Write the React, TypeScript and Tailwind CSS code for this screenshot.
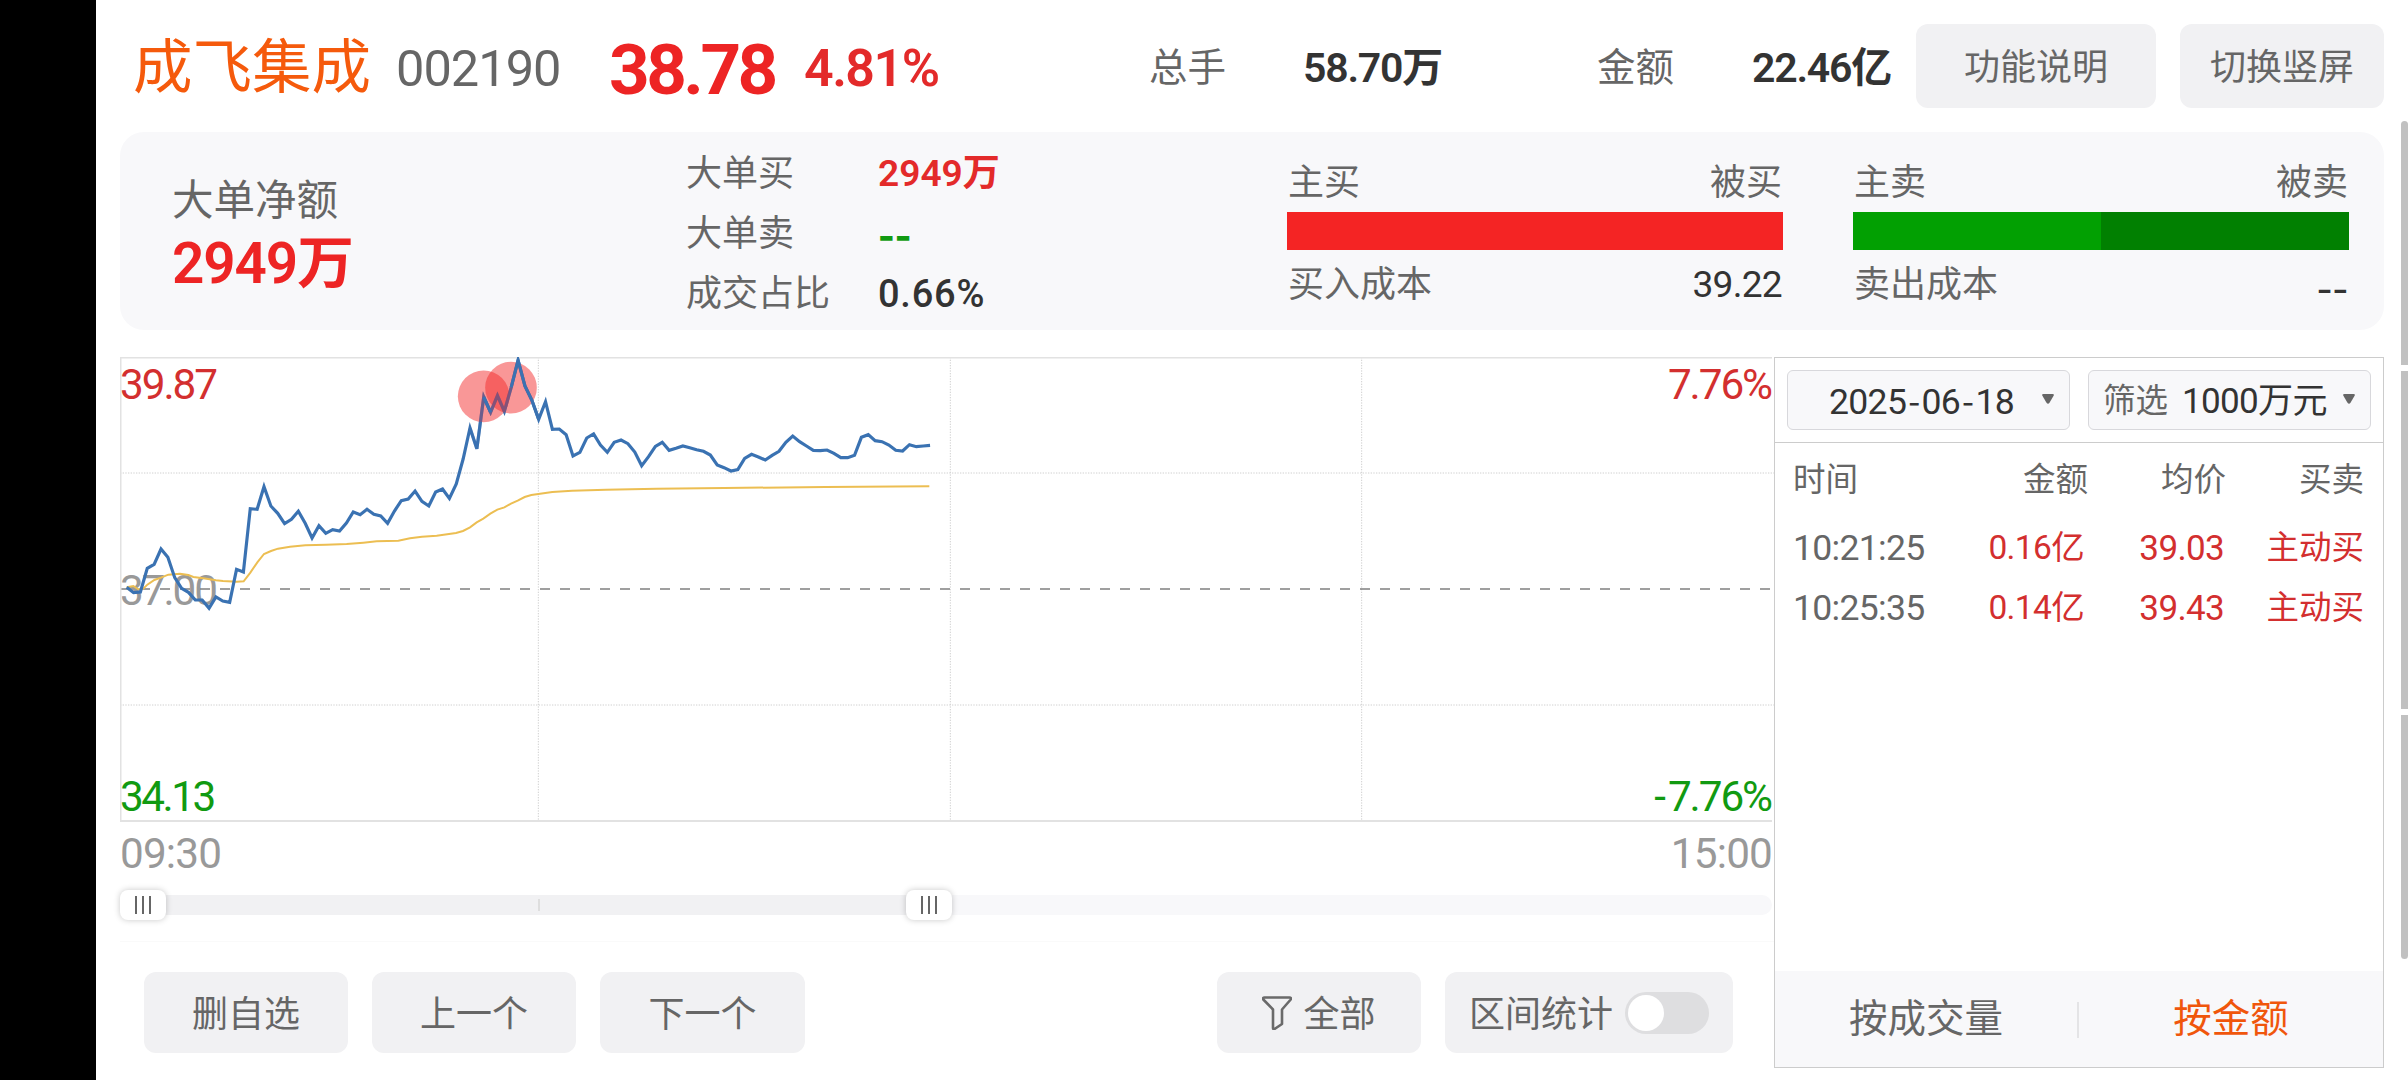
import type { ReactNode } from "react"

interface ITrade {
  time: string
  amount: string
  price: string
  side: string
}

const trades: ITrade[] = [
  { time: "10:21:25", amount: "0.16亿", price: "39.03", side: "主动买" },
  { time: "10:25:35", amount: "0.14亿", price: "39.43", side: "主动买" },
]

// one value per minute from 09:30, in chart units (3 per pixel)
const prices = [
  712, 728, 726, 655, 643, 597, 622, 683, 715, 727, 750, 750, 775, 741, 753,
  757, 658, 666, 476, 478, 410, 468, 490, 521, 508, 484, 520, 564, 527, 550,
  539, 543, 519, 486, 494, 478, 493, 498, 520, 483, 452, 447, 423, 454, 468,
  426, 417, 445, 402, 327, 234, 296, 141, 187, 137, 184, 112, 31, 108, 150,
  208, 155, 238, 237, 254, 318, 307, 264, 252, 285, 307, 277, 270, 281, 306,
  347, 320, 289, 277, 301, 295, 288, 293, 299, 304, 315, 345, 353, 363, 359,
  325, 313, 321, 330, 316, 304, 277, 258, 275, 288, 301, 302, 300, 310, 323,
  323, 316, 262, 254, 272, 275, 285, 301, 303, 284, 290, 288, 286,
]

const average =
  "20,712 40,708 55,718 70,716 82,704 103,690 123,683 145,674 180,671 205,675 220,681 250,685 288,691 309,693 350,695 371,694 391,668 412,637 432,612 453,603 474,596 510,590 556,586 618,584 680,582 730,578 770,574 835,572 870,565 906,560 950,557 1008,549 1029,543 1050,532 1070,517 1090,506 1111,491 1132,479 1153,472 1173,461 1193,452 1214,441 1234,435 1255,432 1297,426 1356,422 1458,419 1610,416 1813,414 2117,411 2428,409"

const points = prices.map((y, i) => `${(20 + i * 20.6).toFixed(1)},${y}`)

const num = "tracking-[-0.02em] [font-size-adjust:cap-height_0.733]"

const PriceChart = () => (
  <svg viewBox="0 21 4962 1395" className="relative block h-[465px] w-[1654px]" fill="none">
    <g stroke="#d0d0d0" strokeWidth={3} strokeDasharray="4 4">
      <path d="M0 369H4962M0 1065H4962" />
      <path d="M1255 21V1413M2491 21V1413M3725 21V1413" />
    </g>
    <path d="M0 717H4962" stroke="#808080" strokeWidth={5} strokeDasharray="30 30" />
    <path d="M4956 22.5H1.5V1413H4956" stroke="#e2e2e2" strokeWidth={6} />
    <polyline points={average} stroke="#ecbe52" strokeWidth={6} />
    <polyline points={points.join(" ")} stroke="#3a72b2" strokeWidth={9.5} />
    <circle cx={1091} cy={139} r={77.5} fill="#f22525" fillOpacity={0.48} />
    <circle cx={1173} cy={113} r={77.5} fill="#f22525" fillOpacity={0.48} />
    <g stroke="#3a72b2" strokeWidth={9.5}>
      <polyline points={points.slice(50, 57).join(" ")} strokeOpacity={0.45} />
      <polyline points={points.slice(52, 54).join(" ")} />
      <polyline points={points.slice(56, 61).join(" ")} />
    </g>
  </svg>
)

const Handle = () => (
  <div className="z-10 flex h-[30px] w-[46px] shrink-0 items-center justify-center gap-[5px] rounded-lg bg-white shadow-[0_0_6px_rgba(0,0,0,0.22)]">
    <span className="h-[18px] w-[2px] bg-[#666]" />
    <span className="h-[18px] w-[2px] bg-[#666]" />
    <span className="h-[18px] w-[2px] bg-[#666]" />
  </div>
)

const Slider = () => (
  <div className="mt-[6px] flex h-[30px] items-center">
    <Handle />
    <div className="-mx-3 flex h-5 w-[764px] items-center bg-[#f1f1f3] pl-[384px]">
      <span className="h-3 w-[2px] bg-[#dedede]" />
    </div>
    <Handle />
    <div className="-ml-3 h-5 w-[832px] rounded-r-[10px] bg-[#f8f8fa]" />
  </div>
)

const GrayButton = ({ className, children }: { className: string; children: ReactNode }) => (
  <button className={`flex items-center justify-center rounded-xl bg-[#f1f1f3] pt-1 text-[36px] ${className}`}>
    {children}
  </button>
)

const CostBlock = ({ left, right, label, value, children }: {
  left: string
  right: string
  label: string
  value: ReactNode
  children: ReactNode
}) => (
  <div className="flex w-[496px] flex-col pt-[33px] text-[36px]">
    <div className="flex h-[36px] items-center justify-between px-px">
      <span>{left}</span>
      <span>{right}</span>
    </div>
    <div className="mt-[11px] flex h-[38px]">{children}</div>
    <div className="mt-[17px] flex h-[36px] items-center justify-between px-px">
      <span>{label}</span>
      <span className={`text-[#333] ${num}`}>{value}</span>
    </div>
  </div>
)

const Header = () => (
  <header className="flex h-[132px] items-center pl-[13px] text-[38.5px]">
    <h1 className="w-[263px] pt-[6px] text-[59.5px] text-[#f55a0c]">成飞集成</h1>
    <span className={`w-[213px] pt-[5px] text-[49px] ${num}`}>002190</span>
    <span className="w-[195px] pt-[6px] text-[71px] font-bold tracking-[-0.05em] text-[#ed2424]">38.78</span>
    <span className="w-[345px] pt-[5px] text-[52px] font-semibold tracking-[-0.03em] text-[#e32a2a]">4.81%</span>
    <span className="w-[154px] pt-1">总手</span>
    <span className="w-[294px] pt-1 text-[41px] font-semibold tracking-[-0.03em] text-[#333]">58.70万</span>
    <span className="w-[155px] pt-1">金额</span>
    <span className="w-[164px] pt-1 text-[41px] font-semibold tracking-[-0.03em] text-[#333]">22.46亿</span>
    <GrayButton className="h-[84px] w-[240px]">功能说明</GrayButton>
    <GrayButton className="ml-6 h-[84px] w-[204px]">切换竖屏</GrayButton>
  </header>
)

const Dashes = () => (
  <span className="block font-['Noto_Sans_CJK_SC',sans-serif] text-[45px] leading-[36px] tracking-normal">--</span>
)

const Summary = () => (
  <section className="flex h-[198px] w-[2264px] rounded-3xl bg-[#f8f8fa] pl-[52px]">
    <div className="flex w-[514px] flex-col pt-[48px]">
      <span className="text-[41.5px]">大单净额</span>
      <span className={`mt-[14px] text-[55px] font-semibold text-[#ed2424] ${num}`}>2949万</span>
    </div>
    <div className="grid w-[601px] grid-cols-[192px_1fr] grid-rows-[60px_60px_60px] content-start items-center pt-[12px] text-[36px]">
      <span>大单买</span>
      <span className="font-semibold text-[#e32a2a] [font-size-adjust:cap-height_0.733]">2949万</span>
      <span>大单卖</span>
      <span className="pb-1 font-bold text-[#119a11]"><Dashes /></span>
      <span>成交占比</span>
      <span className="text-[38px] font-medium tracking-[0.02em] text-[#333]">0.66%</span>
    </div>
    <div className="flex gap-[70px]">
      <CostBlock left="主买" right="被买" label="买入成本" value="39.22">
        <div className="flex-1 bg-[#f42424]" />
      </CostBlock>
      <CostBlock left="主卖" right="被卖" label="卖出成本" value={<Dashes />}>
        <div className="flex-1 bg-[#02a002]" />
        <div className="flex-1 bg-[#018001]" />
      </CostBlock>
    </div>
  </section>
)

const Caret = () => (
  <svg viewBox="0 0 12 10" className="mb-[5px] h-[10px] w-3" fill="#666">
    <path d="M1.500 0h9Q12.500 0 11.600 1.800L7.500 8.800Q6 10.500 4.500 8.800L.4 1.800Q-.5 0 1.500 0z" />
  </svg>
)

const Hyphen = () => (
  <span className="px-[2px] font-['Noto_Sans_CJK_SC',sans-serif]">-</span>
)

const TradePanel = () => (
  <aside className="flex h-[711px] w-[610px] flex-col border border-[#cccccc] text-[32.5px]">
    <div className="flex h-[85px] items-start gap-[18px] border-b border-[#cccccc] pt-[12px] pl-[12px]">
      <div className="flex h-[60px] w-[283px] items-center rounded-md border border-[#d8d8dc] bg-[#f8f8fa] pt-[2px] pl-[41px] text-[#333]">
        <span className={`w-[213px] text-[34.5px] ${num}`}>2025<Hyphen />06<Hyphen />18</span>
        <Caret />
      </div>
      <div className="flex h-[60px] w-[283px] items-center rounded-md border border-[#d8d8dc] bg-[#f8f8fa] pt-[2px] pl-[14px] text-[#333]">
        <span className="w-[79px] text-[#666]">筛选</span>
        <span className={`w-[161px] text-[34px] ${num}`}>1000万元</span>
        <Caret />
      </div>
    </div>
    <div className="grid h-[75px] grid-cols-[151px_144px_138px_138px] items-center pl-[18px] text-right">
      <span className="text-left">时间</span>
      <span>金额</span>
      <span>均价</span>
      <span>买卖</span>
    </div>
    {trades.map((trade: ITrade) => (
      <div key={trade.time} className="grid h-[60px] grid-cols-[151px_140px_140px_140px] items-center pl-[18px] text-right text-[#d32f2f]">
        <span className={`text-left text-[34.5px] text-[#666] ${num}`}>{trade.time}</span>
        <span className={num}>{trade.amount}</span>
        <span className={`text-[34px] ${num}`}>{trade.price}</span>
        <span>{trade.side}</span>
      </div>
    ))}
    <div className="mt-auto flex h-24 items-center bg-[#f8f8fa] pt-px text-[38.5px]">
      <span className="w-[302px] text-center">按成交量</span>
      <span className="h-9 w-[2px] bg-[#e4e4e6]" />
      <span className="flex-1 text-center text-[#f0560c]">按金额</span>
    </div>
  </aside>
)

const ChartPanel = () => (
  <div className="flex w-[1654px] flex-col">
    <div className="relative text-[41px] tracking-[-0.05em] [font-size-adjust:cap-height_0.733]">
      <span className="absolute top-[213px] left-0 text-[#999]">37.00</span>
      <PriceChart />
      <span className="absolute top-[7px] left-0 text-[#d32f2f]">39.87</span>
      <span className="absolute top-[7px] right-[3px] text-[#d32f2f]">7.76%</span>
      <span className="absolute top-[419px] left-0 tracking-[-0.06em] text-[#119a11]">34.13</span>
      <span className="absolute top-[419px] right-[3px] text-[#119a11]">
        <span className="mr-1">-</span>7.76%
      </span>
    </div>
    <div className={`flex h-[62px] items-center justify-between pr-[2px] text-[41px] text-[#999] ${num}`}>
      <span>09:30</span>
      <span>15:00</span>
    </div>
    <Slider />
    <div className="mt-[21px] flex gap-6 border-t border-[#fafafa] pt-[30px] pl-6">
      <GrayButton className="h-[81px] w-[204px]">删自选</GrayButton>
      <GrayButton className="h-[81px] w-[204px]">上一个</GrayButton>
      <GrayButton className="h-[81px] w-[205px]">下一个</GrayButton>
      <GrayButton className="ml-auto h-[81px] w-[204px] gap-[11px]">
        <svg viewBox="0 0 30 34" className="mb-1 h-[34px] w-[30px]" fill="none" stroke="#6a6a6a" strokeWidth={2.6} strokeLinejoin="round">
          <path d="M2.500 1.500h25q2 0 1.200 2L20 13.500v14.500l-7.500 5q-1.500.5-1.500-1V13.500L1.300 3.500q-.8-2 1.200-2z" />
        </svg>
        全部
      </GrayButton>
      <GrayButton className="mr-[41px] h-[81px] w-[288px] gap-3">
        区间统计
        <span className="mb-1 flex h-[42px] w-[84px] items-center rounded-full bg-[#dedee0] px-[3px]">
          <span className="size-9 rounded-full bg-white" />
        </span>
      </GrayButton>
    </div>
  </div>
)

const App = () => (
  <div className="relative flex h-[1080px] w-[2408px] overflow-hidden bg-white font-['Roboto','Noto_Sans_CJK_SC',sans-serif] leading-none whitespace-nowrap text-[#666]">
    <div className="w-24 bg-black" />
    <main className="flex flex-col pl-6">
      <Header />
      <Summary />
      <div className="mt-[27px] flex">
        <ChartPanel />
        <TradePanel />
      </div>
    </main>
    <div className="absolute top-[121px] right-0 flex w-[7px] flex-col gap-[6px]">
      <span className="h-[244px] rounded-t bg-[#c1c1c1]" />
      <span className="h-[338px] bg-[#c1c1c1]" />
      <span className="h-[244px] rounded-b bg-[#c1c1c1]" />
    </div>
  </div>
)

export default App
